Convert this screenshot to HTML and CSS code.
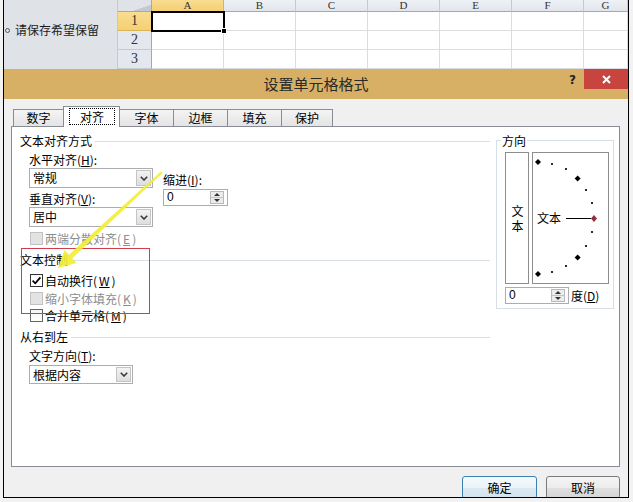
FILE: index.html
```html
<!DOCTYPE html>
<html lang="zh-CN">
<head>
<meta charset="utf-8">
<title>设置单元格格式</title>
<link rel="stylesheet" href="styles.css">
</head>
<body>
<div class="window">
  <div class="sheet">
    <div class="taskpane"><span class="bullet"></span>请保存希望保留</div>
    <div class="grid">
      <div class="corner"></div>
      <div class="colh sel">A</div>
      <div class="colh">B</div>
      <div class="colh">C</div>
      <div class="colh">D</div>
      <div class="colh">E</div>
      <div class="colh">F</div>
      <div class="colh">G</div>

      <div class="rowh sel">1</div>
      <div class="cell active"><span class="handle"></span></div>
      <div class="cell"></div><div class="cell"></div><div class="cell"></div><div class="cell"></div><div class="cell"></div><div class="cell"></div>

      <div class="rowh">2</div>
      <div class="cell"></div><div class="cell"></div><div class="cell"></div><div class="cell"></div><div class="cell"></div><div class="cell"></div><div class="cell"></div>

      <div class="rowh">3</div>
      <div class="cell"></div><div class="cell"></div><div class="cell"></div><div class="cell"></div><div class="cell"></div><div class="cell"></div><div class="cell"></div>
    </div>
  </div>

  <div class="dialog">
    <div class="titlebar">
      <span class="title">设置单元格格式</span>
      <span class="help">?</span>
      <span class="close">
        <svg width="9" height="9" viewBox="0 0 9 9"><path d="M1 1L8 8M8 1L1 8" stroke="#fff" stroke-width="2"/></svg>
      </span>
    </div>

    <div class="tabs">
      <div class="tab t1">数字</div>
      <div class="tab on"><span>对齐</span></div>
      <div class="tab t3">字体</div>
      <div class="tab t3">边框</div>
      <div class="tab t3">填充</div>
      <div class="tab t6">保护</div>
    </div>

    <div class="panel">
      <div class="left">
        <div class="legend">文本对齐方式</div>
        <div class="agrid">
          <div class="lbl mid">水平对齐(<u>H</u>):</div>
          <div></div>
          <div class="select"><span class="val">常规</span><span class="drop"><svg width="8" height="5" viewBox="0 0 8 5"><path d="M0.8 0.8L4 4L7.2 0.8" fill="none" stroke="#3a3a3a" stroke-width="1.6"/></svg></span></div>
          <div class="lbl end">缩进(<u>I</u>):</div>
          <div class="lbl end">垂直对齐(<u>V</u>):</div>
          <div class="spin sp1"><span class="val">0</span><span class="btns"><i class="up"></i><i class="dn"></i></span></div>
          <div class="select"><span class="val">居中</span><span class="drop"><svg width="8" height="5" viewBox="0 0 8 5"><path d="M0.8 0.8L4 4L7.2 0.8" fill="none" stroke="#3a3a3a" stroke-width="1.6"/></svg></span></div>
          <div></div>
        </div>
        <div class="check dis c1"><span class="box"></span>两端分散对齐(<u>E</u>)</div>

        <div class="legend l2">文本控制</div>
        <div class="check c2"><span class="box on"><svg width="11" height="11" viewBox="0 0 11 11"><path d="M1.6 5.6L4.3 8.3L9.4 2.4" fill="none" stroke="#000" stroke-width="1.8"/></svg></span>自动换行(<u>W</u>)</div>
        <div class="check dis c3"><span class="box"></span>缩小字体填充(<u>K</u>)</div>
        <div class="check c4"><span class="box plain"></span>合并单元格(<u>M</u>)</div>

        <div class="legend l3">从右到左</div>
        <div class="lbl dirlbl">文字方向(<u>T</u>):</div>
        <div class="select dirsel"><span class="val">根据内容</span><span class="drop"><svg width="8" height="5" viewBox="0 0 8 5"><path d="M0.8 0.8L4 4L7.2 0.8" fill="none" stroke="#3a3a3a" stroke-width="1.6"/></svg></span></div>
      </div>

      <div class="orient">
        <div class="olegend">方向</div>
        <div class="obody">
          <div class="vtext"><span class="vt">文本</span></div>
          <div class="arc">
            <svg class="arcsvg" width="75" height="130" viewBox="0 0 75 130">
              <g fill="#000">
                <path d="M5 6L8 9L5 12L2 9Z"/>
                <path d="M44.6 22.4L47.6 25.4L44.6 28.4L41.6 25.4Z"/>
                <path d="M44.6 101.6L47.6 104.6L44.6 107.6L41.6 104.6Z"/>
                <path d="M5 118L8 121L5 124L2 121Z"/>
              </g>
              <g fill="#2a2a2a">
                <rect x="18" y="10" width="2" height="2"/>
                <rect x="32" y="15" width="2" height="2"/>
                <rect x="52" y="36" width="2" height="2"/>
                <rect x="58" y="49" width="2" height="2"/>
                <rect x="58" y="78" width="2" height="2"/>
                <rect x="52" y="92" width="2" height="2"/>
                <rect x="32" y="112" width="2" height="2"/>
                <rect x="18" y="118" width="2" height="2"/>
              </g>
              <line x1="33" y1="65.5" x2="58" y2="65.5" stroke="#000" stroke-width="1"/>
              <path d="M61 62L64 65.5L61 69L58 65.5Z" fill="#9b2a3c"/>
            </svg>
            <span class="arctext">文本</span>
          </div>
        </div>
        <div class="orow">
          <div class="spin sp2"><span class="val">0</span><span class="btns"><i class="up"></i><i class="dn"></i></span></div>
          <span class="deg">度(<u>D</u>)</span>
        </div>
      </div>

      <div class="annot"></div>
      <svg class="arrow" width="152" height="115" viewBox="0 0 152 115">
        <path d="M131.3 6.3L38.8 89.7L34.4 84.9L28 103L46.6 98.1L42.2 93.3L132.7 7.7Z" fill="#f2ee35" fill-opacity="0.92"/>
      </svg>
    </div>

    <div class="buttons">
      <div class="btn def">确定</div>
      <div class="btn">取消</div>
    </div>
  </div>
</div>
</body>
</html>
```

FILE: styles.css
```css
* { box-sizing: border-box; margin: 0; padding: 0; }
html, body { width: 633px; height: 502px; overflow: hidden; background: #f2f2f2; }
body {
  font-family: "Noto Sans CJK SC", "Noto Sans", sans-serif;
  font-size: 12px;
  color: #000;
}
u { text-decoration: underline; text-underline-offset: 1px; }

.window {
  margin-left: 3px;
  width: 626px;
  height: 498px;
  border-left: 1px solid #000;
  border-right: 1px solid #000;
  border-bottom: 1px solid #000;
  overflow: hidden;
  display: flex;
  flex-direction: column;
  background: #fff;
}

/* ---------- spreadsheet strip ---------- */
.sheet { height: 69px; flex: none; display: flex; }
.taskpane {
  width: 114px;
  background: #dfe3e8;
  padding: 22px 0 0 1px;
  line-height: 16px;
  color: #1c1c1c;
  white-space: nowrap;
  border-right: 1px solid #c3cad3;
}
.bullet {
  display: inline-block;
  width: 5px;
  height: 5px;
  border: 1px solid #555;
  border-radius: 50%;
  margin-right: 5px;
  vertical-align: 2px;
}
.grid {
  flex: 1;
  display: grid;
  grid-template-columns: 34px repeat(6, 72px) 1fr;
  grid-template-rows: 12px 19px 19px 19px;
  background: #fff;
}
.corner {
  background: linear-gradient(to top left, #c3c9d1 0 28%, #dfe3e8 28%);
  border-right: 1px solid #9eaab8;
  border-bottom: 1px solid #9eaab8;
}
.colh {
  background: linear-gradient(#eef1f5, #e2e6ec);
  border-right: 1px solid #c2cad5;
  border-bottom: 1px solid #9eaab8;
  font-family: "Liberation Serif", serif;
  font-size: 11px;
  line-height: 11px;
  color: #333;
  text-align: center;
}
.rowh {
  background: #e4e8ee;
  border-right: 1px solid #9eaab8;
  border-bottom: 1px solid #c2cad5;
  font-family: "Liberation Serif", serif;
  font-size: 14px;
  line-height: 18px;
  color: #333;
  text-align: center;
}
.colh.sel, .rowh.sel { background: linear-gradient(#f9dd92, #f5cf72); border-color: #d9b45a; }
.cell {
  border-right: 1px solid #dadcdf;
  border-bottom: 1px solid #dadcdf;
}
.cell.active {
  position: relative;
  z-index: 1;
  outline: 2px solid #000;
  outline-offset: -1px;
}
.handle {
  position: absolute;
  right: -4px;
  bottom: -4px;
  width: 6px;
  height: 6px;
  background: #000;
  border: 1px solid #fff;
}

/* ---------- dialog ---------- */
.dialog { flex: 1; display: flex; flex-direction: column; background: #f0f0f0; overflow: hidden; }
.titlebar { height: 30px; flex: none; display: flex; background: #d8b065; }
.title {
  flex: 1;
  padding-left: 67px;
  text-align: center;
  line-height: 30px;
  font-size: 15px;
  color: #2a2a2a;
}
.help {
  width: 23px;
  line-height: 22px;
  font-family: "DejaVu Sans", sans-serif;
  font-weight: bold;
  font-size: 12px;
  color: #222;
  text-align: center;
}
.close {
  width: 44px;
  height: 20px;
  background: #c8453f;
  display: flex;
  align-items: center;
  justify-content: center;
}

.tabs { margin: 7px 0 0 9px; height: 20px; display: flex; align-items: flex-end; flex: none; }
.tab {
  height: 17px;
  width: 55px;
  margin-left: -1px;
  border: 1px solid #898c95;
  border-bottom: none;
  background: linear-gradient(#f4f4f4, #e4e4e4);
  text-align: center;
  line-height: 16px;
}
.tab.t1 { width: 51px; margin-left: 0; }
.tab.t6 { width: 52px; }
.tab.on {
  width: 57px;
  height: 21px;
  margin-bottom: -1px;
  background: #fff;
  position: relative;
  z-index: 2;
}
.tab.on span {
  display: block;
  width: 46px;
  height: 17px;
  margin: 1px 0 0 5px;
  border: 1px dotted #000;
  line-height: 15px;
}

.panel {
  flex: none;
  margin-left: 7px;
  width: 609px;
  height: 341px;
  border: 1px solid #898c95;
  background: #fff;
  position: relative;
  display: flex;
  padding: 6px 5px 0 8px;
}
.left { flex: 1; }
.legend { display: flex; align-items: center; height: 16px; line-height: 16px; white-space: nowrap; }
.legend::after { content: ""; flex: 1; height: 1px; background: #d5dfe5; margin-left: 3px; }
.legend.l2 { margin-top: 6px; }
.legend.l3 { margin-top: 6px; }

.agrid {
  margin: 2px 0 0 9px;
  display: grid;
  grid-template-columns: 124px 65px;
  column-gap: 10px;
  grid-template-rows: 17px 20px 19px 20px;
}
.lbl { line-height: 16px; white-space: nowrap; }
.lbl.mid { align-self: center; }
.lbl.end { align-self: end; }

.select { display: flex; height: 20px; border: 1px solid #abadb3; background: #fff; }
.select .val { flex: 1; padding-left: 3px; line-height: 18px; }
.select .drop {
  width: 15px;
  margin: 1px;
  border: 1px solid #c5c5c5;
  background: linear-gradient(#f3f3f3, #dedede);
  display: flex;
  align-items: center;
  justify-content: center;
}
.dirlbl { margin: 3px 0 0 9px; }
.dirsel { margin: 1px 0 0 9px; width: 104px; height: 19px; }
.dirsel .val { line-height: 17px; }

.spin { display: flex; height: 17px; border: 1px solid #abadb3; background: #fff; }
.spin .val { flex: 1; padding-left: 3px; line-height: 15px; font-family: "Liberation Sans", sans-serif; }
.spin .btns {
  width: 14px;
  margin: 1px 3px 1px 1px;
  border: 1px solid #b9b9b9;
  background: #ececec;
  display: flex;
  flex-direction: column;
}
.spin .btns i { flex: 1; display: flex; align-items: center; justify-content: center; }
.spin .btns i.up { border-bottom: 1px solid #c4c4c4; }
.spin .btns i.up::before {
  content: "";
  border-left: 3px solid transparent;
  border-right: 3px solid transparent;
  border-bottom: 3px solid #333;
}
.spin .btns i.dn::before {
  content: "";
  border-left: 3px solid transparent;
  border-right: 3px solid transparent;
  border-top: 3px solid #333;
}
.sp1 { margin-top: 1px; }
.sp2 { width: 64px; }

.check { display: flex; align-items: center; height: 16px; gap: 2px; margin-left: 10px; white-space: nowrap; }
.check.c1 { margin-top: 3px; }
.check.c2 { margin-top: 4px; }
.check.c3 { margin-top: 2px; }
.check.c4 { margin-top: 1px; }
.box {
  width: 13px;
  height: 13px;
  border: 1px solid #333;
  background: #fff;
  display: flex;
  align-items: center;
  justify-content: center;
}
.box.plain { border-color: #666; background: linear-gradient(#f4f4f4, #fff); }
.check.dis { color: #8d8d8d; }
.check.dis .box { border-color: #c2c2c2; background: #e3e3e3; }

/* orientation group */
.orient {
  width: 118px;
  height: 169px;
  margin: 7px 0 0 6px;
  border: 1px solid #d5dfe5;
  padding: 0 0 0 8px;
}
.olegend {
  width: fit-content;
  margin: -8px 0 0 -4px;
  padding: 0 1px;
  background: #fff;
  line-height: 16px;
  height: 16px;
}
.obody { display: flex; gap: 3px; margin-top: 3px; height: 132px; }
.vtext {
  width: 24px;
  border: 1px solid #8d8d8d;
  display: flex;
  align-items: center;
  justify-content: center;
}
.vt {
  writing-mode: vertical-rl;
  text-orientation: upright;
  letter-spacing: 3px;
  line-height: 16px;
  margin-top: 3px;
}
.arc {
  width: 77px;
  border: 1px solid #8d8d8d;
  position: relative;
  display: flex;
  align-items: center;
  padding-left: 4px;
}
.arcsvg { position: absolute; left: 0; top: 0; }
.arctext { position: relative; line-height: 16px; }
.orow { display: flex; align-items: center; margin-top: 3px; height: 17px; }
.deg { margin-left: 2px; line-height: 16px; white-space: nowrap; }

/* annotations */
.annot {
  position: absolute;
  left: 9px;
  top: 121px;
  width: 129px;
  height: 66px;
  border: 1px solid #cf3d4c;
}
.arrow { position: absolute; left: 18px; top: 38px; }

/* buttons */
.buttons { display: flex; justify-content: flex-end; gap: 9px; padding-right: 8px; margin-top: 9px; flex: none; }
.btn {
  width: 74px;
  height: 23px;
  border: 1px solid #7a7a7a;
  border-radius: 3px;
  background: linear-gradient(#f5f5f5 0, #ececec 50%, #e0e0e0 51%, #d6d6d6 100%);
  line-height: 21px;
  text-align: center;
}
.btn.def {
  width: 75px;
  border-color: #3c7fb1;
  background: linear-gradient(#f4f9fc 0, #ebf3f9 50%, #dde9f2 51%, #d2e3ef 100%);
}
```
